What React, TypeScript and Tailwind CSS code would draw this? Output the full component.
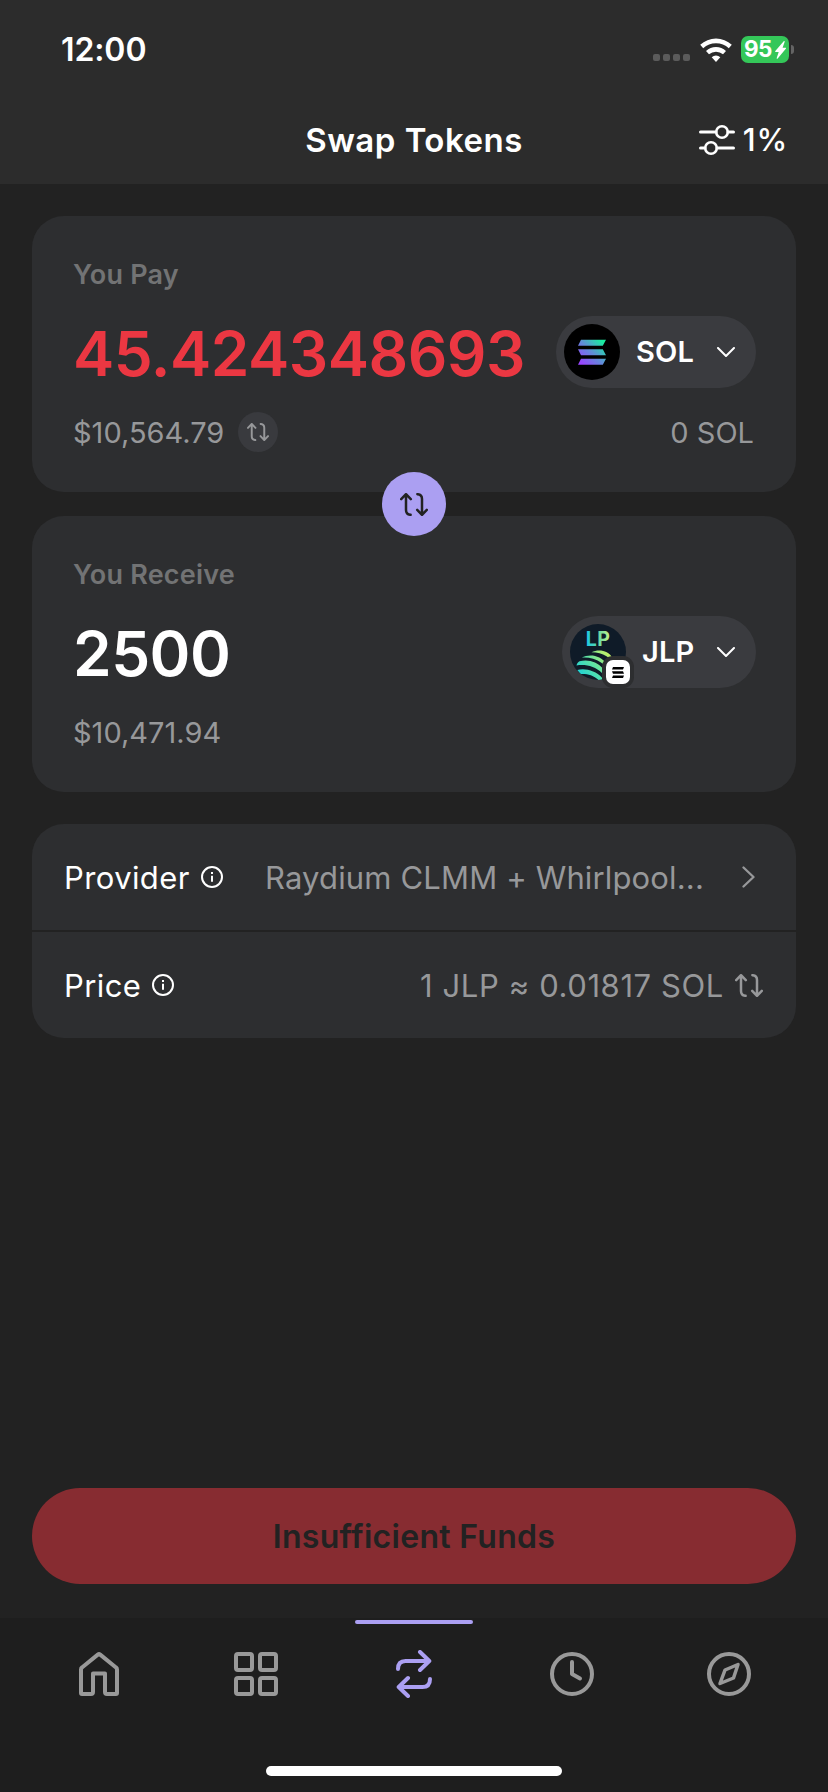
import * as React from 'react'

// Up/down arrows, shared by the flip button, the fiat toggle and the price row.
function FlipIcon({ className, strokeWidth = 2.5 }: { className?: string; strokeWidth?: number }) {
  return (
    <svg
      viewBox="0 0 28 23"
      fill="none"
      stroke="currentColor"
      strokeWidth={strokeWidth}
      strokeLinecap="round"
      strokeLinejoin="round"
      className={className}
    >
      <path d="M1.200 6.200 6 1.200l4.800 5M6 1.600V17c0 3 1.600 4.600 4.600 4.800" />
      <path d="m26.800 16.800-4.800 5-4.800-5M22 21.400V6c0-3-1.600-4.600-4.600-4.800" />
    </svg>
  )
}

function InfoIcon() {
  return (
    <svg viewBox="0 0 22 22" fill="none" stroke="white" strokeWidth="2" className="size-[22px]">
      <circle cx="11" cy="11" r="10" />
      <path d="M11 9.800v6M11 6v2" />
    </svg>
  )
}

function ChevronDown() {
  return (
    <svg
      viewBox="0 0 18 10"
      fill="none"
      stroke="white"
      strokeWidth="2"
      strokeLinecap="round"
      strokeLinejoin="round"
      className="h-[10px] w-[18px]"
    >
      <path d="m1 1 8 8 8-8" />
    </svg>
  )
}

function SolIcon() {
  return (
    <svg viewBox="0 0 56 56" className="size-14">
      <defs>
        <linearGradient id="sol" x1="15" y1="41" x2="41" y2="15" gradientUnits="userSpaceOnUse">
          <stop offset="0.080" stopColor="#9945ff" />
          <stop offset="0.500" stopColor="#5f8fd8" />
          <stop offset="0.900" stopColor="#19eca0" />
        </linearGradient>
      </defs>
      <circle cx="28" cy="28" r="28" fill="#000" />
      <g fill="url(#sol)">
        <path d="M17 15.700h25l-3.200 6H14z" />
        <path d="M14 25.200h24.800l3.200 6H17z" />
        <path d="M17 34.800h25l-3.200 6H14z" />
      </g>
    </svg>
  )
}

function JlpIcon() {
  return (
    <div className="relative size-14">
      <svg viewBox="0 0 56 56" className="size-14">
        <defs>
          <linearGradient id="lp" x1="16" y1="0" x2="40" y2="0" gradientUnits="userSpaceOnUse">
            <stop offset="0" stopColor="#19c8e6" />
            <stop offset="0.500" stopColor="#5fd8a8" />
            <stop offset="1" stopColor="#c7f284" />
          </linearGradient>
          <linearGradient id="jup" x1="10" y1="54" x2="42" y2="26" gradientUnits="userSpaceOnUse">
            <stop offset="0" stopColor="#17d0dc" />
            <stop offset="0.450" stopColor="#5fe3a4" />
            <stop offset="0.900" stopColor="#c7f265" />
          </linearGradient>
          <clipPath id="disc">
            <circle cx="28" cy="28" r="28" />
          </clipPath>
        </defs>
        <circle cx="28" cy="28" r="28" fill="#0f1b28" />
        <text
          x="28"
          y="22.200"
          textAnchor="middle"
          fill="url(#lp)"
          fontSize="19.500"
          fontWeight="700"
          letterSpacing="0.300"
          className="font-['Inter',sans-serif]"
        >
          LP
        </text>
        <g fill="url(#jup)" clipPath="url(#disc)">
          <path d="M21.500 28.300C28 25 38 25.800 42.500 34c-2.500.300-4.500-.500-6-1.800-4.500-2.700-9-3.900-15-3.900z" />
          <path d="M11.500 33.700c8-4 18.500-2.800 25.500 6.300-3 .300-4.500-.300-6-1.500-6-4-12-5.300-19.500-4.800z" />
          <path d="M6.500 41.500c.300-1.800 1.500-3.600 3-4.300C18 35 27 37.500 33 44.500l-1 4.500C25 42.500 16 40 6.500 41.500z" />
          <path d="M7.300 46c8-2 18 .500 25 8L31 58.500c-6-7-13-9-20.500-8.500z" />
        </g>
      </svg>
      <div className="absolute top-[36px] left-[36px] flex size-6 items-center justify-center rounded-[7px] bg-white ring-4 ring-[#2d2e30]">
        <svg viewBox="0 0 12 11" className="h-[11px] w-[12px]">
          <path d="M1 0H12l-1 2.500H0zM0 4.200h11L12 6.700H1zM1 8.500H12L11 11H0z" />
        </svg>
      </div>
    </div>
  )
}

function TokenPill({ icon, symbol, className }: { icon: React.ReactNode; symbol: string; className: string }) {
  return (
    <button type="button" className={`flex h-[72px] items-center rounded-full bg-[#3a3b3f] pr-[21px] pl-2 ${className}`}>
      {icon}
      <span className="ml-4 text-[29px] font-semibold tracking-[0.2px] text-white">{symbol}</span>
      <span className="ml-auto">
        <ChevronDown />
      </span>
    </button>
  )
}

function StatusBar() {
  return (
    <div className="flex h-[99px] items-center justify-between pr-[34px] pl-[61px]">
      <span className="pt-px text-[32px] font-semibold tracking-[-0.1px]">12:00</span>
      <div className="flex items-center">
        <div className="mt-[16px] flex gap-[3px]">
          {[0, 1, 2, 3].map((dot) => (
            <span key={dot} className="size-[7px] rounded-[2px] bg-[#5b5b5b]" />
          ))}
        </div>
        <svg viewBox="0 0 32 24" className="ml-[10px] h-6 w-8" fill="white">
          <path d="M16 24l-4.300-4.800a6.600 6.600 0 0 1 8.600 0z" />
          <path d="M6 12.900a15 15 0 0 1 20 0l-3 3.400a10.500 10.500 0 0 0-14 0z" />
          <path d="M.2 6.800a23 23 0 0 1 31.600 0l-3 3.500a18.600 18.600 0 0 0-25.600 0z" />
        </svg>
        <div className="ml-[9px] flex h-[27px] w-12 items-center justify-center rounded-[7px] bg-[#34c759]">
          <span className="text-[22.500px] leading-none font-bold tracking-[-0.400px]">95</span>
          <svg viewBox="0 0 11 18" className="ml-[3px] h-[18px] w-[11px] shrink-0" fill="white">
            <path d="M8.700.300c.500-.500 1.200-.200 1 .500L7.600 6.800h2.800c.6 0 .8.500.4 1L2.700 17.600c-.5.500-1.200.2-1-.5l2-6H.700c-.6 0-.8-.5-.4-1z" />
          </svg>
        </div>
        <span className="ml-[2px] h-[9px] w-[3px] rounded-r-full bg-[#646464]" />
      </div>
    </div>
  )
}

const TABS = [
  {
    name: 'Home',
    icon: (
      <path d="M6 19.500c0-.8.300-1.500 1-2L22.800 4.600a2 2 0 0 1 2.400 0L41 17.500c.7.500 1 1.200 1 2V43a1 1 0 0 1-1 1h-9a2 2 0 0 1-2-2V23.500H18V42a2 2 0 0 1-2 2H7a1 1 0 0 1-1-1z" />
    ),
  },
  {
    name: 'Collectibles',
    icon: (
      <>
        <rect x="4" y="4" width="16" height="16" rx="2" />
        <rect x="28" y="4" width="16" height="16" rx="2" />
        <rect x="4" y="28" width="16" height="16" rx="2" />
        <rect x="28" y="28" width="16" height="16" rx="2" />
      </>
    ),
  },
  {
    name: 'Swap',
    active: true,
    icon: (
      <>
        <path d="M8 19c0-5 2.500-8 7.500-8H39M30 2l9.300 9L30 20" />
        <path d="M40 29c0 5-2.500 8-7.500 8H9M18 28l-9.300 9 9.300 9" />
      </>
    ),
  },
  {
    name: 'Activity',
    icon: (
      <>
        <circle cx="24" cy="24" r="20" />
        <path d="M24 12v12l8 4.500" />
      </>
    ),
  },
  {
    name: 'Explore',
    icon: (
      <>
        <circle cx="24" cy="24" r="20" />
        <path strokeWidth="3.500" d="M33 14.500 20 20l-5 13.500L28.500 28z" />
      </>
    ),
  },
]

export default function App() {
  return (
    <div className="flex h-[1792px] w-[828px] flex-col overflow-hidden bg-[#222222] font-['Inter',sans-serif] text-white">
      <header className="h-[184px] bg-[#2c2c2c]">
        <StatusBar />
        <div className="grid h-[85px] grid-cols-[1fr_auto_1fr] items-center px-10 pb-[3px]">
          <span />
          <h1 className="pt-px text-[33px] font-semibold tracking-[0.5px] whitespace-nowrap">Swap Tokens</h1>
          <button type="button" className="flex items-center justify-self-end">
            <svg viewBox="0 0 36 32" className="h-8 w-9" fill="none" stroke="white" strokeWidth="3" strokeLinecap="round">
              <path d="M1.500 8H17M29 8h5.500M1.500 24H6M18 24h16.500" />
              <circle cx="23" cy="8" r="5.800" strokeWidth="2.600" />
              <circle cx="12" cy="24" r="5.800" strokeWidth="2.600" />
            </svg>
            <span className="ml-2 pt-px text-[31px] font-medium tracking-[0.8px]">1%</span>
          </button>
        </div>
      </header>

      <main className="flex flex-1 flex-col px-8 pt-8">
        <section className="relative h-[276px] rounded-[32px] bg-[#2d2e30] pt-[39px] pr-10 pl-[41px]">
          <p className="text-[27px] leading-10 font-semibold tracking-[0.200px] text-[#727374]">You Pay</p>
          <div className="mt-[21px] flex h-[72px] items-center justify-between">
            <span className="pt-[2px] text-[62px] font-semibold tracking-[-0.500px] text-[#eb3742]">45.424348693</span>
            <TokenPill icon={<SolIcon />} symbol="SOL" className="w-[200px]" />
          </div>
          <div className="mt-6 flex h-10 items-center text-[29px] text-[#97989a]">
            <span className="pt-[2px]">$10,564.79</span>
            <button type="button" className="ml-[14px] flex size-10 items-center justify-center rounded-full bg-[#393a3e]">
              <FlipIcon className="h-[18px] w-[22px]" />
            </button>
            <span className="mr-[2px] ml-auto pt-[2px]">0 SOL</span>
          </div>
          <button
            type="button"
            className="absolute top-[256px] left-[350px] z-10 flex size-16 items-center justify-center rounded-full bg-[#ab9ff2] text-[#222222]"
          >
            <FlipIcon className="h-[23px] w-7" />
          </button>
        </section>

        <section className="mt-6 h-[276px] rounded-[32px] bg-[#2d2e30] pt-[39px] pr-10 pl-[41px]">
          <p className="text-[27px] leading-10 font-semibold tracking-[0.200px] text-[#727374]">You Receive</p>
          <div className="mt-[21px] flex h-[72px] items-center justify-between">
            <span className="pt-[2px] text-[62px] font-semibold tracking-[-0.500px]">2500</span>
            <TokenPill icon={<JlpIcon />} symbol="JLP" className="w-[194px]" />
          </div>
          <div className="mt-6 flex h-10 items-center pt-[2px] text-[29px] text-[#97989a]">$10,471.94</div>
        </section>

        <section className="mt-8 rounded-[32px] bg-[#2d2e30] text-[31px]">
          <div className="flex h-[108px] items-center border-b-2 border-[#222222] pr-[41px] pl-8">
            <span className="mr-[11px] pt-[2px] tracking-[0.400px]">Provider</span>
            <InfoIcon />
            <span className="ml-auto pt-[2px] tracking-[0.150px] text-[#97989a]">Raydium CLMM + Whirlpool...</span>
            <svg
              viewBox="0 0 13 22"
              className="ml-[38px] h-[22px] w-[13px]"
              fill="none"
              stroke="#97989a"
              strokeWidth="2.300"
              strokeLinecap="round"
              strokeLinejoin="round"
            >
              <path d="m1.500 1.500 10 9.500-10 9.500" />
            </svg>
          </div>
          <div className="flex h-[106px] items-center pr-[33px] pl-8">
            <span className="mr-[11px] pt-[2px] tracking-[0.400px]">Price</span>
            <InfoIcon />
            <span className="ml-auto pt-[2px] tracking-[0.600px] text-[#97989a]">1 JLP ≈ 0.01817 SOL</span>
            <FlipIcon className="ml-[11px] h-[23px] w-7 text-[#97989a]" />
          </div>
        </section>

        <button
          type="button"
          className="mt-auto mb-[34px] h-24 rounded-full bg-[#872c31] pt-px text-[32px] font-semibold tracking-[0.300px] text-[#222222]"
        >
          Insufficient Funds
        </button>
      </main>

      <footer className="flex h-[174px] flex-col justify-between bg-[#1e1e1e] pt-[2px] pb-4">
        <nav className="flex px-5">
          {TABS.map((tab) => (
            <button
              key={tab.name}
              type="button"
              aria-label={tab.name}
              className={`flex flex-1 flex-col items-center ${tab.active ? 'text-[#ab9ff2]' : 'text-[#999999]'}`}
            >
              <span className={`h-1 w-[118px] rounded-full ${tab.active ? 'bg-[#ab9ff2]' : ''}`} />
              <svg
                viewBox="0 0 48 48"
                className="mt-[26px] size-12"
                fill="none"
                stroke="currentColor"
                strokeWidth="4"
                strokeLinecap="round"
                strokeLinejoin="round"
              >
                {tab.icon}
              </svg>
            </button>
          ))}
        </nav>
        <div className="mx-auto h-[10px] w-[296px] rounded-full bg-white" />
      </footer>
    </div>
  )
}
